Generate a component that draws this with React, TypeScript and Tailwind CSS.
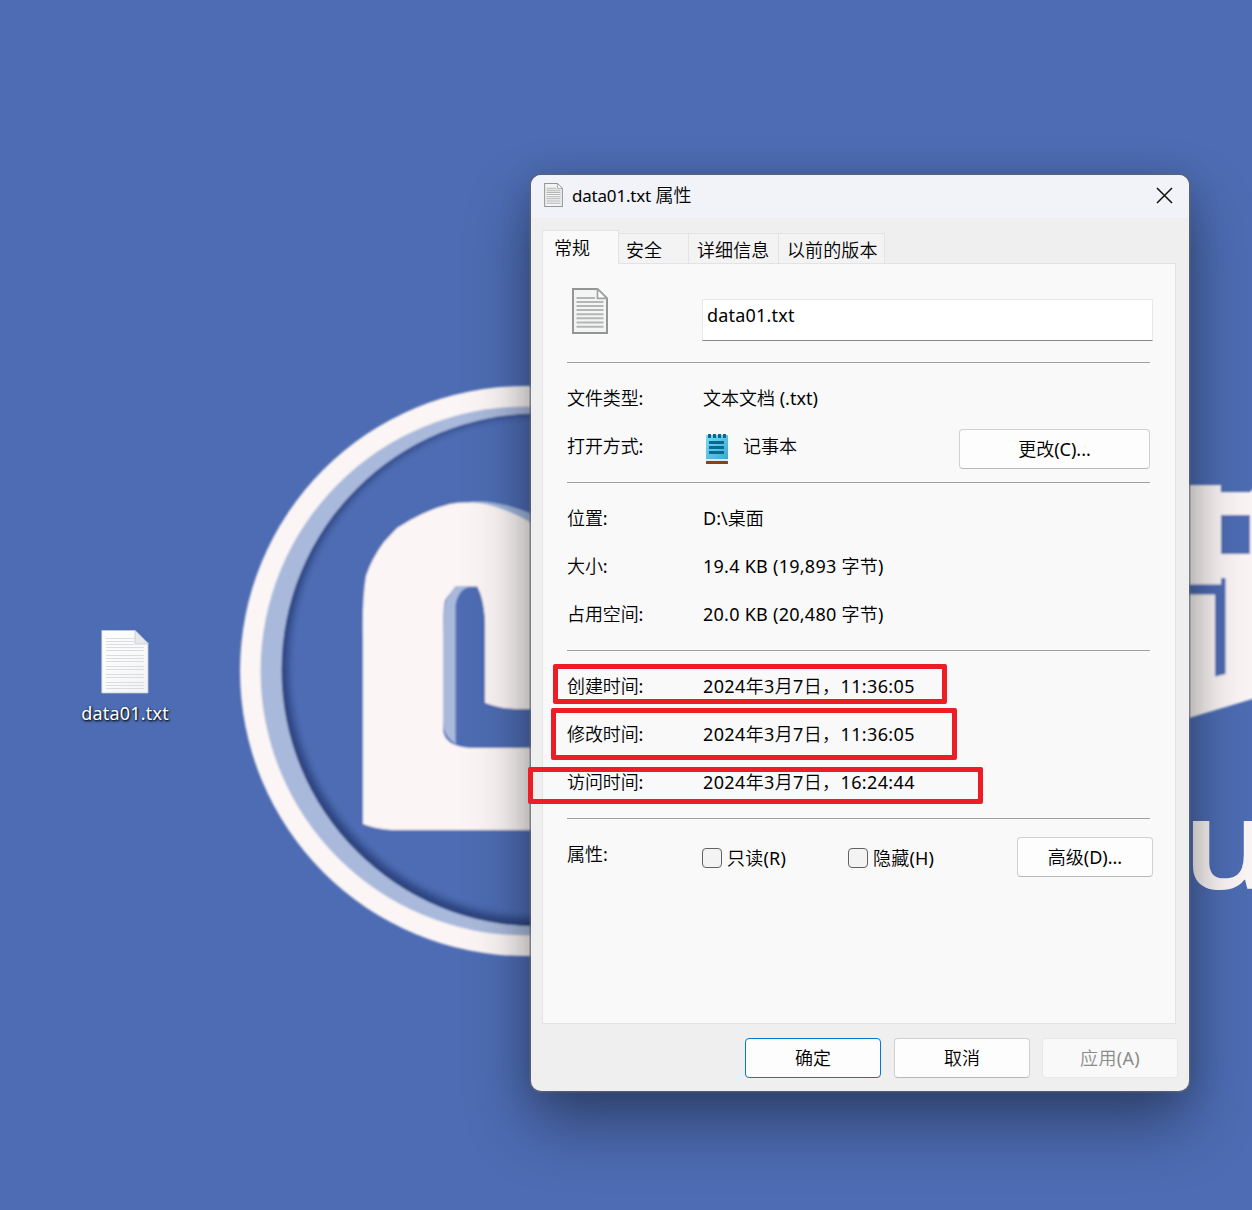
import type { ReactNode } from 'react';

function Wallpaper() {
  return (
    <svg className="absolute inset-0 h-full w-full" viewBox="0 0 1252 1210" aria-hidden="true">
      <defs>
        <clipPath id="disc">
          <circle cx="525" cy="671" r="264.5" />
        </clipPath>
        <filter id="soft" x="-5%" y="-5%" width="110%" height="110%">
          <feGaussianBlur stdDeviation="3.5" />
        </filter>
        <filter id="edge" x="-5%" y="-5%" width="110%" height="110%">
          <feGaussianBlur stdDeviation="0.8" />
        </filter>
        <clipPath id="face">
          <circle cx="538" cy="670" r="256.5" />
        </clipPath>
      </defs>
      <rect width="1252" height="1210" fill="#4d6cb3" />
      <g filter="url(#edge)">
        <circle cx="525" cy="671" r="285" fill="#fbf5f5" />
        <g clipPath="url(#disc)">
          <circle cx="525" cy="671" r="265" fill="#a9b9db" />
          <g clipPath="url(#face)">
            <circle cx="538" cy="670" r="257" fill="#2c4480" />
            <circle cx="540" cy="666.500" r="252" fill="#4d6cb3" filter="url(#soft)" />
          </g>
        </g>
        <path d="M470 502Q505 498 560 527L560 540L470 540Z" fill="#9db6dc" />
        <path
          d="M363 824V640Q362 600 366 576Q372 558 384 542L397 528Q425 510 450 504Q475 500 496 507Q520 515 531 523H560V709H515Q500 709 485 703V630Q485 602 477 586H456L445 600Q443 610 443 630V728Q443 748 475 748H560V830H392Q375 829 363 824Z"
          fill="#fbf5f5"
        />
        <path d="M443 635Q443 610 446 600L456 586H477L478 592Q456 594 456 610V744Q443 736 443 722Z" fill="#a9b9db" />
        <path d="M455.500 605Q458 590 469 587H477Q485 600 485 630V703Q500 709 515 709H560V748H475Q462 747 455.500 741Z" fill="#4d6cb3" />
        <path d="M1180 485H1221V492H1250L1254 488V698.500L1189 718H1180Z" fill="#fbf5f5" />
        <rect x="1221" y="515" width="29" height="39" fill="#4d6cb3" />
        <path d="M1180 584.500H1221V578H1225.500V674L1215 676.500V594.500H1180Z" fill="#4d6cb3" />
      </g>
      <text
        transform="translate(1182 888.5) scale(1.13 1)"
        fill="#fbf5f5"
        fontFamily="'Open Sans', 'Noto Sans', sans-serif"
        fontSize="125"
        fontWeight="600"
      >
        u
      </text>
    </svg>
  );
}

function DocIcon({ className }: { className: string }) {
  return (
    <svg className={className} viewBox="0 0 36 46" aria-hidden="true">
      <path d="M1 1H25.500L35 10.500V45H1Z" fill="#f3f5f5" stroke="#949696" strokeWidth="2" />
      <path d="M25.500 1V10.300H35Z" fill="#fff" stroke="#a0a2a2" strokeWidth="1.700" />
      <path d="M4.500 10H23M4.500 14H31.500M4.500 18H31.500M4.500 22H31.500M4.500 26.200H31.500M4.500 30.300H31.500M4.500 34.500H31.500M4.500 38.700H31.500" stroke="#b4b6b6" strokeWidth="2" />
    </svg>
  );
}

function DesktopFile() {
  return (
    <div className="absolute left-[65px] top-[630px] flex w-[120px] flex-col items-center">
      <svg className="h-[64px] w-[48px]" viewBox="0 0 48 64" aria-hidden="true">
        <defs>
          <linearGradient id="paper" x1="0" y1="0" x2="1" y2="1">
            <stop offset="0" stopColor="#fff" />
            <stop offset="1" stopColor="#f2f4f6" />
          </linearGradient>
        </defs>
        <path d="M.8.500H34L47 13.500V63H.8Z" fill="url(#paper)" stroke="#c3c9d3" strokeWidth=".8" />
        <path
          d="M5 8.500H33M5 11.500H33M5 14.500H33M5 17.500H43M5 20.500H43M5 25.500H43M5 28.500H43M5 31.500H43M5 36.500H43M5 39.500H43M5 44.500H43M5 47.500H43M5 52.500H43M5 55.500H43M5 58.500H43"
          stroke="#d9dddf"
          strokeWidth="1"
        />
        <path d="M34 .5V14H47.500Z" fill="#e6e8ec" stroke="#c5c9d0" strokeWidth=".8" />
      </svg>
      <span className="mt-[6px] text-[18px] leading-[26px] tracking-[0.2px] text-white [text-shadow:1px_1px_2px_rgba(0,0,0,0.9),0_1px_3px_rgba(0,0,0,0.6)]">
        data01.txt
      </span>
    </div>
  );
}

function NotepadIcon() {
  return (
    <svg className="h-[31px] w-[22px]" viewBox="0 0 22 31" aria-hidden="true">
      <defs>
        <linearGradient id="pad" x1="0" y1="0" x2="1" y2="1">
          <stop offset="0" stopColor="#7bdcf3" />
          <stop offset="1" stopColor="#3ba6cf" />
        </linearGradient>
      </defs>
      <rect y="1" width="22" height="25" rx=".6" fill="url(#pad)" />
      <rect y="25" width="22" height="2" fill="#e4e6ea" />
      <rect y="27" width="22" height="3" rx=".6" fill="#8a4310" />
      <path d="M3.500 0V4M8.500 0V4M13.500 0V4M18.500 0V4" stroke="#056a8c" strokeWidth="3" />
      <path d="M3 8.500H18M3 13.500H18M3 18.500H18" stroke="#066b92" strokeWidth="3" />
    </svg>
  );
}

function Tab({ children, className }: { children: ReactNode; className: string }) {
  return <div className={`h-[31px] border-t border-r border-[#e3e3e3] bg-[#f3f3f3] leading-[33px] ${className}`}>{children}</div>;
}

function Row({ label, children, className = '' }: { label: string; children: ReactNode; className?: string }) {
  return (
    <div className="flex h-12 items-center">
      <span className="w-[136px] tracking-[-0.1px]">{label}</span>
      <span className={className}>{children}</span>
    </div>
  );
}

function Rule() {
  return <div className="mr-[25px] h-px bg-[#a0a0a0]" />;
}

function Check({ children, className }: { children: ReactNode; className: string }) {
  return (
    <label className={`flex h-6 items-center gap-[5px] tracking-[0.2px] ${className}`}>
      <span className="h-5 w-5 rounded-[4px] border border-[#626262] bg-[#f3f3f3]" />
      <span>{children}</span>
    </label>
  );
}

function Button({ children, className }: { children: ReactNode; className: string }) {
  return <button className={`flex h-10 items-center justify-center rounded-[4px] border ${className}`}>{children}</button>;
}

const plain = 'border-[#d0d0d0] border-b-[#b9b9b9] bg-[#fdfdfd]';

function PropertiesWindow() {
  return (
    <section className="absolute left-[531px] top-[175px] flex h-[916px] w-[658px] flex-col rounded-[10px] bg-[#efefef] shadow-[0_0_0_1.5px_rgba(95,100,115,0.7),0_32px_64px_rgba(0,0,0,0.38),0_2px_32px_rgba(0,0,0,0.14)]">
      <header className="flex h-[43px] shrink-0 items-center rounded-t-[10px] bg-[#f1f3f9] pl-[13px] pr-[16px]">
        <DocIcon className="mb-[3px] h-[24px] w-[19px]" />
        <h1 className="mb-[2px] ml-[9px] grow">
          <span className="text-[17px] tracking-[-0.2px]">data01.txt</span> 属性
        </h1>
        <svg className="mb-[2px] h-[17px] w-[17px]" viewBox="0 0 17 17" aria-hidden="true">
          <path d="M1 1L16 16M16 1L1 16" stroke="#111" strokeWidth="1.500" />
        </svg>
      </header>

      <nav className="relative z-10 ml-[11px] mt-[12px] flex h-[34px] items-end">
        <div className="h-[34px] w-[77px] border border-b-0 border-[#e3e3e3] bg-[#f9f9f9] pl-[11px] leading-[34px]">常规</div>
        <Tab className="w-[70px] border-b pl-[7px]">安全</Tab>
        <Tab className="w-[90px] border-b pl-[8px] tracking-[0.1px]">详细信息</Tab>
        <Tab className="w-[106px] border-b pl-[8px] tracking-[0.1px]">以前的版本</Tab>
      </nav>

      <div className="ml-[11px] mr-[13px] -mt-px h-[761px] shrink-0 border border-[#e3e3e3] bg-[#f9f9f9] pl-[24px]">
        <div className="flex h-[98px] items-start">
          <DocIcon className="ml-[5px] mt-[24px] h-[46px] w-[36px]" />
          <div className="ml-[94px] mt-[35px] h-[42px] w-[451px] border border-[#e8e8e8] border-b-[#868686] bg-white pl-[4px] leading-[31px] tracking-[0.2px]">
            data01.txt
          </div>
        </div>
        <Rule />
        <div className="h-[119px] pt-[11px]">
          <Row label="文件类型:">文本文档 (.txt)</Row>
          <div className="flex h-12 items-center">
            <span className="w-[136px] tracking-[-0.1px]">打开方式:</span>
            <div className="ml-[3px] mt-[6px]">
              <NotepadIcon />
            </div>
            <span className="ml-[15px] mt-px grow">记事本</span>
            <Button className={`mr-[25px] mt-[5px] w-[191px] pt-px ${plain}`}>更改(C)...</Button>
          </div>
        </div>
        <Rule />
        <div className="h-[167px] pt-[11px]">
          <Row label="位置:">D:\桌面</Row>
          <Row label="大小:" className="tracking-[0.26px]">19.4 KB (19,893 字节)</Row>
          <Row label="占用空间:" className="tracking-[0.26px]">20.0 KB (20,480 字节)</Row>
        </div>
        <Rule />
        <div className="h-[167px] pt-[11px]">
          <Row label="创建时间:" className="tracking-[0.37px]">2024年3月7日，11:36:05</Row>
          <Row label="修改时间:" className="tracking-[0.37px]">2024年3月7日，11:36:05</Row>
          <Row label="访问时间:" className="tracking-[0.37px]">2024年3月7日，16:24:44</Row>
        </div>
        <Rule />
        <div className="flex pt-[18px]">
          <span className="w-[135px] leading-[35px]">属性:</span>
          <Check className="mt-[9px] w-[146px]">只读(R)</Check>
          <Check className="mt-[9px] w-[169px]">隐藏(H)</Check>
          <Button className={`w-[136px] ${plain}`}>高级(D)...</Button>
        </div>
      </div>

      <footer className="flex justify-end gap-[13px] pr-[11px] pt-[14px]">
        <Button className="w-[136px] border-[#0078d4] bg-[#fdfdfd]">确定</Button>
        <Button className={`w-[136px] ${plain}`}>取消</Button>
        <Button className="-ml-px w-[136px] border-[#e8e8e8] bg-[#f9f9f9] text-[#8b8b8b] tracking-[0.3px]">应用(A)</Button>
      </footer>
    </section>
  );
}

export default function App() {
  return (
    <main className="relative h-[1210px] w-[1252px] overflow-hidden bg-[#4d6cb3] text-[18px] text-black [font-family:'Noto_Sans','Noto_Sans_CJK_SC_DemiLight','Noto_Sans_CJK_SC_Light','Noto_Sans_CJK_SC',sans-serif]">
      <Wallpaper />
      <DesktopFile />
      <PropertiesWindow />
      <div className="absolute left-[553px] top-[664px] h-[40px] w-[394px] rounded-[2px] border-[5px] border-[#ee1c25]" />
      <div className="absolute left-[551px] top-[708px] h-[52px] w-[406px] rounded-[2px] border-[5px] border-[#ee1c25]" />
      <div className="absolute left-[528px] top-[767px] h-[37px] w-[455px] rounded-[2px] border-[5px] border-[#ee1c25]" />
    </main>
  );
}
